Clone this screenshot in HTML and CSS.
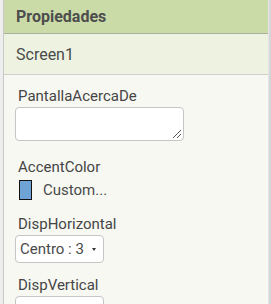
FILE: index.html
```html
<!DOCTYPE html>
<html>
<head>
<meta charset="utf-8">
<link rel="stylesheet" href="styles.css">
</head>
<body>
<div class="frame">
  <div class="gutter"></div>
  <div class="panel">
    <div class="header">Propiedades</div>
    <div class="component">Screen1</div>
    <div class="props">
      <div class="prop prop-text">
        <div class="label">PantallaAcercaDe</div>
        <div class="textarea"><span class="grip"></span></div>
      </div>
      <div class="prop">
        <div class="label">AccentColor</div>
        <div class="color-row"><span class="swatch"></span><span class="color-name">Custom...</span></div>
      </div>
      <div class="prop">
        <div class="label">DispHorizontal</div>
        <div class="select">Centro : 3 <span class="caret"></span></div>
      </div>
      <div class="prop">
        <div class="label">DispVertical</div>
        <div class="select">Centro : 3 <span class="caret"></span></div>
      </div>
    </div>
  </div>
  <div class="scroll"></div>
</div>
</body>
</html>
```
FILE: styles.css
```css
html, body {
  margin: 0;
  padding: 0;
  width: 271px;
  height: 304px;
  overflow: hidden;
  background: #f7f8f2;
  font-family: Roboto, "Liberation Sans", sans-serif;
}
.frame {
  display: flex;
  height: 304px;
}
.gutter {
  width: 3px;
  background: #eeeeee;
  border-right: 1px solid #c8c8c8;
  flex: none;
}
.panel {
  flex: 1;
  background: #f7f8f2;
  overflow: hidden;
}
.scroll {
  width: 2px;
  flex: none;
  background: #d6d6d6;
  border-left: 1px solid #e6e6e6;
}
.header {
  box-sizing: border-box;
  height: 34px;
  background: #cbdba8;
  border-bottom: 1px solid #a9ae9f;
  padding-left: 12px;
  display: flex;
  align-items: center;
  font-weight: bold;
  font-size: 16px;
  color: #4d4d4d;
}
.component {
  height: 41px;
  box-sizing: border-box;
  background: #eef3e1;
  border-bottom: 1px solid #cfcfcf;
  padding-left: 12px;
  display: flex;
  align-items: center;
  font-size: 16px;
  color: #4a4a4a;
}
.props {
  padding: 12px 0 0 11px;
  display: flex;
  flex-direction: column;
  gap: 13px;
}
.prop {
  display: flex;
  flex-direction: column;
  align-items: flex-start;
}
.prop-text {
  margin-bottom: 4px;
}
.label {
  font-size: 15px;
  line-height: 18px;
  color: #454545;
  padding-left: 3px;
  margin-bottom: 2px;
}
.textarea {
  width: 169px;
  height: 34px;
  box-sizing: border-box;
  background: #ffffff;
  border: 1px solid #c6c6c6;
  border-radius: 4px;
  position: relative;
}
.grip {
  position: absolute;
  right: 2px;
  bottom: 2px;
  width: 8px;
  height: 8px;
  background: linear-gradient(135deg, transparent 45%, #555 45%, #555 55%, transparent 55%, transparent 70%, #555 70%, #555 80%, transparent 80%);
}
.color-row {
  display: flex;
  align-items: center;
  height: 24px;
  padding-left: 4px;
}
.swatch {
  width: 11px;
  height: 18px;
  background: #6fa3d6;
  border: 1px solid #111;
}
.color-name {
  margin-left: 11px;
  font-size: 15px;
  color: #4a4a4a;
}
.select {
  display: flex;
  align-items: center;
  width: 89px;
  height: 28px;
  box-sizing: border-box;
  background: #ffffff;
  border: 1px solid #c6c6c6;
  border-radius: 4px;
  padding-left: 4px;
  font-size: 15px;
  color: #4a4a4a;
  white-space: nowrap;
}
.caret {
  margin-left: auto;
  margin-right: 7px;
  width: 0;
  height: 0;
  border-left: 2.5px solid transparent;
  border-right: 2.5px solid transparent;
  border-top: 3px solid #333;
}
```
